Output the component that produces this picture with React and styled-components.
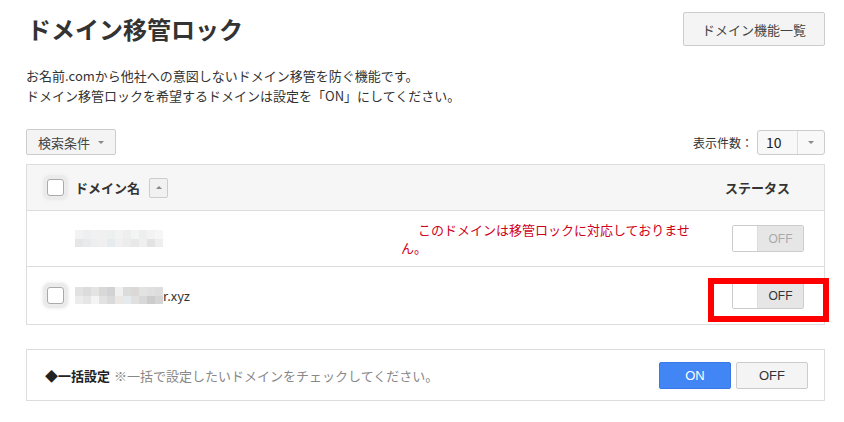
import React from 'react';
import styled, { createGlobalStyle } from 'styled-components';

const GlobalStyle = createGlobalStyle`
  body {
    margin: 0;
    background: #fff;
    font-family: "Noto Sans CJK JP", "Noto Sans", sans-serif;
    color: #333;
  }
`;

const Page = styled.div`
  width: 799px;
  padding: 11px 0 0 26px;
`;

const Head = styled.div`
  display: flex;
  align-items: center;
  justify-content: space-between;
  height: 36px;
`;

const Title = styled.h1`
  margin: 0 0 0 1px;
  font-size: 24px;
  font-weight: bold;
  color: #333;
  line-height: 34px;
`;

const GreyButton = styled.button`
  font-family: inherit;
  background: #f4f4f4;
  border: 1px solid #ccc;
  border-radius: 2px;
  color: #444;
  font-size: ${p => p.$size || 13}px;
  height: ${p => p.$h || 34}px;
  padding: 0 ${p => p.$px || 18}px;
  display: inline-flex;
  align-items: center;
  gap: 8px;
  cursor: pointer;
`;

const Desc = styled.p`
  margin: 19px 0 0;
  font-size: 13px;
  line-height: 20px;
  color: #333;
`;

const Toolbar = styled.div`
  margin-top: 23px;
  display: flex;
  align-items: center;
  justify-content: space-between;
`;

const Caret = styled.span`
  width: 0;
  height: 0;
  border-left: 3px solid transparent;
  border-right: 3px solid transparent;
  border-${p => (p.$up ? 'bottom' : 'top')}: 3px solid #888;
`;

const PerPage = styled.div`
  display: flex;
  align-items: center;
  gap: 4px;
  font-size: 12px;
  color: #333;
`;

const Select = styled.div`
  display: flex;
  width: 66px;
  height: 23px;
  border: 1px solid #ccc;
  border-radius: 3px;
  background: #f8f8f8;
  font-size: 14px;
`;

const SelectValue = styled.span`
  flex: 1;
  padding-left: 8px;
  line-height: 23px;
  color: #222;
  border-right: 1px solid #ddd;
`;

const SelectArrow = styled.span`
  width: 26px;
  display: flex;
  align-items: center;
  justify-content: center;
`;

const Table = styled.div`
  margin-top: 9px;
  border: 1px solid #ddd;
`;

const Row = styled.div`
  position: relative;
  display: flex;
  align-items: center;
  height: ${p => p.$h}px;
  background: ${p => (p.$head ? '#f6f6f6' : '#fff')};
  border-bottom: ${p => (p.$last ? 'none' : '1px solid #ddd')};
`;

const CheckCell = styled.div`
  width: 48px;
  padding-left: 20px;
  box-sizing: border-box;
  display: flex;
  align-items: center;
`;

const Check = styled.span`
  width: 15px;
  height: 15px;
  border: 1px solid #aaa;
  border-radius: 3px;
  background: #fff;
  box-shadow: 0 0 0 4px #ebebeb, 0 0 3px 5px #f0f0f0;
`;

const NameCell = styled.div`
  width: 326px;
  display: flex;
  align-items: center;
  font-size: 13px;
  color: #333;
  font-weight: ${p => (p.$head ? 'bold' : 'normal')};
`;

const SortBtn = styled.span`
  margin-left: 9px;
  width: 17px;
  height: 18px;
  border: 1px solid #ccc;
  border-radius: 2px;
  background: #f1f1f1;
  display: flex;
  align-items: center;
  justify-content: center;
`;

const Mosaic = styled.div`
  display: grid;
  grid-template-columns: repeat(11, 8px);
  grid-auto-rows: 8.5px;
`;

const Block = styled.span`
  background: ${p => p.$c};
`;

const Note = styled.div`
  width: 296px;
  font-size: 13px;
  line-height: 18px;
  color: #d0021b;
  text-indent: 17px;
`;

const StatusCell = styled.div`
  flex: 1;
  display: flex;
  justify-content: flex-end;
  padding-right: ${p => p.$pr}px;
  font-size: 13px;
  font-weight: bold;
  color: #333;
`;

const Toggle = styled.div`
  display: flex;
  width: 70px;
  height: 25px;
  border: 1px solid #ccc;
  border-radius: 2px;
  overflow: hidden;
`;

const Knob = styled.span`
  width: 24px;
  background: #fff;
  border-right: 1px solid #ddd;
`;

const ToggleLabel = styled.span`
  flex: 1;
  background: #e6e6e6;
  font-size: 12px;
  font-weight: normal;
  color: ${p => (p.$disabled ? '#aaa' : '#333')};
  display: flex;
  align-items: center;
  justify-content: center;
  font-family: "Liberation Sans", Arial, sans-serif;
`;

const Highlight = styled.div`
  position: absolute;
  right: -5px;
  top: 11px;
  width: 121px;
  height: 44px;
  box-sizing: border-box;
  border: 6px solid #ff0000;
  pointer-events: none;
`;

const BulkBox = styled.div`
  margin-top: 24px;
  height: 50px;
  border: 1px solid #ddd;
  display: flex;
  align-items: center;
  justify-content: space-between;
  padding: 0 16px 0 18px;
  font-size: 13px;
`;

const BulkLabel = styled.div`
  b {
    color: #222;
  }
  span {
    color: #888;
    margin-left: 4px;
  }
`;

const Buttons = styled.div`
  display: flex;
  gap: 5px;
`;

const BulkBtn = styled.button`
  font-family: "Liberation Sans", Arial, sans-serif;
  width: 72px;
  height: 27px;
  font-size: 13px;
  border-radius: 2px;
  cursor: pointer;
  background: ${p => (p.$primary ? '#4285f4' : '#f4f4f4')};
  border: 1px solid ${p => (p.$primary ? '#3b78e7' : '#ccc')};
  color: ${p => (p.$primary ? '#fff' : '#333')};
`;

const mosaicA = [
  '#f2f2f2', '#eeeff0', '#f1f1f1', '#f0f0f0', '#eef0f0', '#f2f2f2', '#eeeeee', '#f3f4f4', '#eeeeee', '#f3f3f3', '#f6f6f6',
  '#e6e6e6', '#e9eaeb', '#eeeeee', '#f0f0f0', '#e6ebee', '#f0f0f0', '#ececec', '#e8e8e8', '#eef0f0', '#e3e3e3', '#eeeeee',
];
const mosaicB = [
  '#e2e2e2', '#dcdcdc', '#e6e4e2', '#d8d8d8', '#d2d2d4', '#f0f0f0', '#dcdcdc', '#dcd8d8', '#e2e4e4', '#e0e0e0', '#dddddd',
  '#ececec', '#e6e6e6', '#f4f4f4', '#e2e2e2', '#dadada', '#ebe8e4', '#e4eaee', '#e0e0e0', '#d8d8d8', '#cccccc', '#d4d4d4',
];

const Blur = ({ colors }) => (
  <Mosaic>
    {colors.map((c, i) => <Block key={i} $c={c} />)}
  </Mosaic>
);

const Switch = ({ disabled }) => (
  <Toggle>
    <Knob />
    <ToggleLabel $disabled={disabled}>OFF</ToggleLabel>
  </Toggle>
);

const App = () => (
  <Page>
    <GlobalStyle />
    <Head>
      <Title>ドメイン移管ロック</Title>
      <GreyButton>ドメイン機能一覧</GreyButton>
    </Head>
    <Desc>
      お名前.comから他社への意図しないドメイン移管を防ぐ機能です。<br />
      ドメイン移管ロックを希望するドメインは設定を「ON」にしてください。
    </Desc>
    <Toolbar>
      <GreyButton $h={26} $px={11}>検索条件 <Caret /></GreyButton>
      <PerPage>
        表示件数：
        <Select>
          <SelectValue>10</SelectValue>
          <SelectArrow><Caret /></SelectArrow>
        </Select>
      </PerPage>
    </Toolbar>
    <Table>
      <Row $head $h={45}>
        <CheckCell><Check /></CheckCell>
        <NameCell $head>
          ドメイン名
          <SortBtn><Caret $up /></SortBtn>
        </NameCell>
        <Note />
        <StatusCell $pr={34}>ステータス</StatusCell>
      </Row>
      <Row $h={55}>
        <CheckCell />
        <NameCell><Blur colors={mosaicA} /></NameCell>
        <Note>このドメインは移管ロックに対応しておりません。</Note>
        <StatusCell $pr={20}><Switch disabled /></StatusCell>
      </Row>
      <Row $h={57} $last>
        <CheckCell><Check /></CheckCell>
        <NameCell><Blur colors={mosaicB} />r.xyz</NameCell>
        <Note />
        <StatusCell $pr={20}><Switch /></StatusCell>
        <Highlight />
      </Row>
    </Table>
    <BulkBox>
      <BulkLabel>
        <b>◆一括設定</b>
        <span>※一括で設定したいドメインをチェックしてください。</span>
      </BulkLabel>
      <Buttons>
        <BulkBtn $primary>ON</BulkBtn>
        <BulkBtn>OFF</BulkBtn>
      </Buttons>
    </BulkBox>
  </Page>
);

export default App;
